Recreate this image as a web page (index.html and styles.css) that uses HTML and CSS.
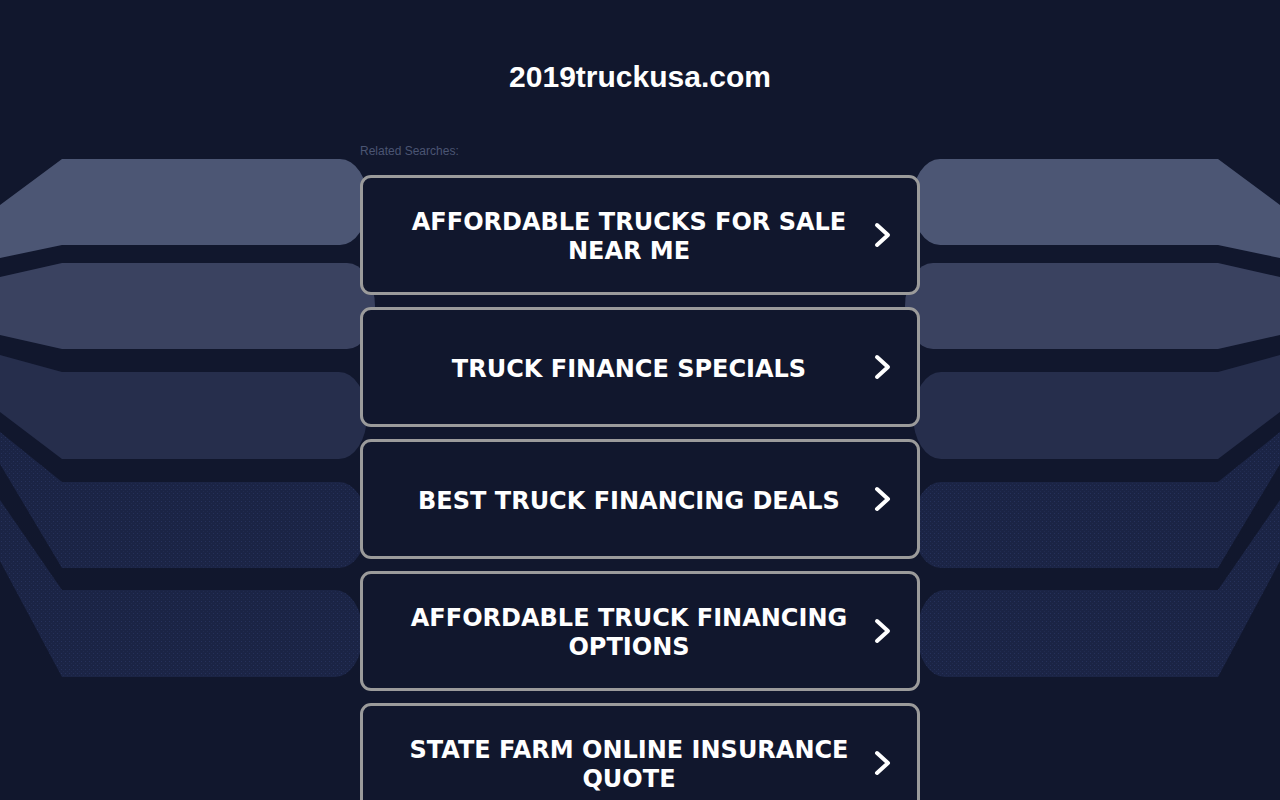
FILE: index.html
```html
<!DOCTYPE html>
<html lang="en">
<head>
<meta charset="utf-8">
<title>2019truckusa.com</title>
<link rel="stylesheet" href="styles.css">
</head>
<body>
<svg class="backdrop" viewBox="0 0 1280 800" width="1280" height="800" aria-hidden="true">
  <defs>
    <pattern id="dots" width="4" height="4" patternUnits="userSpaceOnUse">
      <rect width="4" height="4" fill="#1b2445"/>
      <rect x="1" y="1" width="1" height="1" fill="#26315a"/>
      <rect x="3" y="3" width="1" height="1" fill="#212b4f"/>
    </pattern>
    <g id="bands">
      <path d="M0 205 L62 159 L340 159 A28 43 0 0 1 340 245 L62 245 L0 258 Z" fill="#4c5674"/>
      <path d="M0 277 L62 263 L347 263 A28 43 0 0 1 347 349 L62 349 L0 335 Z" fill="#3a4260"/>
      <path d="M0 355 L62 372 L339 372 A28 43.5 0 0 1 339 459 L62 459 L0 412 Z" fill="#262e4c"/>
      <path d="M0 432 L62 482 L339 482 A28 43 0 0 1 339 568 L62 568 L0 464 Z" fill="url(#dots)"/>
      <path d="M0 500 L62 590 L335 590 A28 43.5 0 0 1 335 677 L62 677 L0 561 Z" fill="url(#dots)"/>
    </g>
  </defs>
  <use href="#bands"/>
  <use href="#bands" transform="translate(1280 0) scale(-1 1)"/>
</svg>

<main class="page">
  <h1 class="domain">2019truckusa.com</h1>
  <section class="related">
    <p class="related-label">Related Searches:</p>
    <ul class="links">
      <li><a class="link" href="#"><span class="link-text">AFFORDABLE TRUCKS FOR SALE NEAR ME</span><svg class="chev" viewBox="0 0 18 26"><polyline points="3,3 14,13 3,23"/></svg></a></li>
      <li><a class="link" href="#"><span class="link-text">TRUCK FINANCE SPECIALS</span><svg class="chev" viewBox="0 0 18 26"><polyline points="3,3 14,13 3,23"/></svg></a></li>
      <li><a class="link" href="#"><span class="link-text">BEST TRUCK FINANCING DEALS</span><svg class="chev" viewBox="0 0 18 26"><polyline points="3,3 14,13 3,23"/></svg></a></li>
      <li><a class="link" href="#"><span class="link-text">AFFORDABLE TRUCK FINANCING OPTIONS</span><svg class="chev" viewBox="0 0 18 26"><polyline points="3,3 14,13 3,23"/></svg></a></li>
      <li><a class="link" href="#"><span class="link-text">STATE FARM ONLINE INSURANCE QUOTE</span><svg class="chev" viewBox="0 0 18 26"><polyline points="3,3 14,13 3,23"/></svg></a></li>
    </ul>
  </section>
</main>
</body>
</html>
```

FILE: styles.css
```css
html, body {
  margin: 0;
  padding: 0;
}

body {
  background: #11172d;
  font-family: "Liberation Sans", Arial, sans-serif;
  color: #ffffff;
  overflow: hidden;
  height: 800px;
}

.backdrop {
  position: absolute;
  top: 0;
  left: 0;
  width: 1280px;
  height: 800px;
  z-index: 0;
}

.page {
  position: relative;
  z-index: 1;
  display: flex;
  flex-direction: column;
  align-items: center;
  padding-top: 59px;
}

.domain {
  margin: 0;
  font-size: 30px;
  line-height: 36px;
  font-weight: bold;
  color: #ffffff;
}

.related {
  width: 560px;
  margin-top: 49px;
}

.related-label {
  margin: 0 0 17px 0;
  font-size: 12px;
  line-height: 14px;
  color: #4b5573;
}

.links {
  list-style: none;
  margin: 0;
  padding: 0;
  display: flex;
  flex-direction: column;
  gap: 12px;
}

.link {
  box-sizing: border-box;
  height: 120px;
  display: flex;
  align-items: center;
  gap: 16px;
  padding: 0 25px 0 37px;
  border: 3px solid #9b9b9b;
  border-radius: 11px;
  background: #11172d;
  text-decoration: none;
  color: #ffffff;
}

.link-text {
  flex: 1;
  margin-top: 4px;
  text-align: center;
  font-family: "DejaVu Sans", Verdana, sans-serif;
  font-weight: bold;
  font-size: 24px;
  line-height: 29px;
}

.chev {
  width: 18px;
  height: 26px;
  flex: none;
}

.chev polyline {
  fill: none;
  stroke: #ffffff;
  stroke-width: 4;
  stroke-linecap: round;
  stroke-linejoin: round;
}
```
